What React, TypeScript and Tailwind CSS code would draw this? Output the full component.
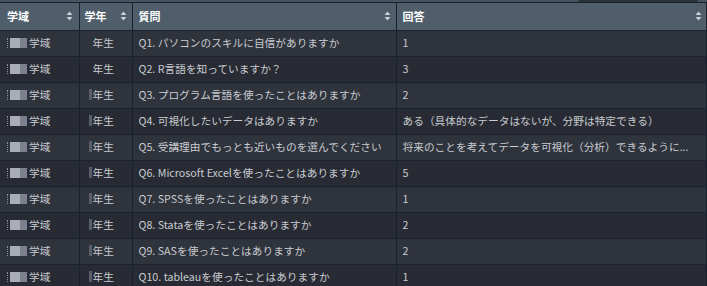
import React from "react";

const rows = [
  { q: "Q1. パソコンのスキルに自信がありますか", a: "1" },
  { q: "Q2. R言語を知っていますか？", a: "3" },
  { q: "Q3. プログラム言語を使ったことはありますか", a: "2" },
  { q: "Q4. 可視化したいデータはありますか", a: "ある（具体的なデータはないが、分野は特定できる）" },
  { q: "Q5. 受講理由でもっとも近いものを選んでください", a: "将来のことを考えてデータを可視化（分析）できるように..." },
  { q: "Q6. Microsoft Excelを使ったことはありますか", a: "5" },
  { q: "Q7. SPSSを使ったことはありますか", a: "1" },
  { q: "Q8. Stataを使ったことはありますか", a: "2" },
  { q: "Q9. SASを使ったことはありますか", a: "2" },
  { q: "Q10. tableauを使ったことはありますか", a: "1" },
];

function SortIcon() {
  return (
    <svg width="7" height="10" viewBox="0 0 7 10" className="shrink-0">
      <path d="M3.5 0.5 L6.5 4 L0.5 4 Z" fill="#c9ced3" />
      <path d="M0.5 6 L6.5 6 L3.5 9.5 Z" fill="#c9ced3" />
    </svg>
  );
}

function Redacted() {
  return (
    <span className="flex items-center">
      <span className="w-px h-[10px] border-l border-dotted border-[#8a8f9a] mr-[2px]" />
      <span className="w-[10px] h-[10px] bg-[#a9adb8]" />
      <span className="w-[7px] h-[10px] bg-[#7d818d] mr-[2px]" />
    </span>
  );
}

export default function App() {
  return (
    <div
      className="w-[707px] h-[286px] overflow-hidden bg-[#262a31] text-[10.7px] relative"
      style={{ fontFamily: '"Noto Sans CJK JP", "Noto Sans", sans-serif' }}
    >
      {/* top strip with scrollbar */}
      <div className="h-[3px] bg-[#46545f] border-b border-[#17222c] relative">
        <div className="absolute left-[578px] w-[120px] top-0 h-[2px] rounded-b bg-[#2b343c]" />
      </div>
      <table className="border-collapse table-fixed w-[706px]">
        <colgroup>
          <col className="w-[79px]" />
          <col className="w-[53px]" />
          <col className="w-[264px]" />
          <col className="w-[310px]" />
        </colgroup>
        <thead>
          <tr className="h-[27px] bg-[#4f5e6a] text-white font-bold text-[11px]">
            <th className="border-r border-b border-[#17222c] pl-[7px] pr-[6px] text-left font-bold">
              <div className="flex items-center justify-between">
                <span>学域</span>
                <SortIcon />
              </div>
            </th>
            <th className="border-r border-b border-[#17222c] pl-[5px] pr-[5px] text-left font-bold">
              <div className="flex items-center justify-between">
                <span>学年</span>
                <SortIcon />
              </div>
            </th>
            <th className="border-r border-b border-[#17222c] pl-[6px] pr-[5px] text-left font-bold">
              <div className="flex items-center justify-between">
                <span>質問</span>
                <SortIcon />
              </div>
            </th>
            <th className="border-r border-b border-[#17222c] pl-[6px] pr-[4px] text-left font-bold">
              <div className="flex items-center justify-between">
                <span>回答</span>
                <SortIcon />
              </div>
            </th>
          </tr>
        </thead>
        <tbody className="text-[#c8cbd1]">
          {rows.map((r, i) => (
            <tr key={i} className={`h-[26px] ${i % 2 === 0 ? "bg-[#2f333c]" : "bg-[#282b33]"}`}>
              <td className="border-r border-b border-[#17222c] pl-[7px]">
                <div className="flex items-center">
                  <Redacted />
                  <span>学域</span>
                </div>
              </td>
              <td className="border-r border-b border-[#17222c]">
                <div className="flex items-center pl-[9px]">
                  <span className={`w-[3px] h-[11px] mr-[1px] ${i >= 2 ? "bg-[#5a5e68]" : "bg-transparent"}`} />
                  <span>年生</span>
                </div>
              </td>
              <td className="border-r border-b border-[#17222c] pl-[6px] pr-[2px] whitespace-nowrap">{r.q}</td>
              <td className="border-r border-b border-[#17222c] pl-[6px] pr-[4px] whitespace-nowrap">{r.a}</td>
            </tr>
          ))}
        </tbody>
      </table>
    </div>
  );
}
